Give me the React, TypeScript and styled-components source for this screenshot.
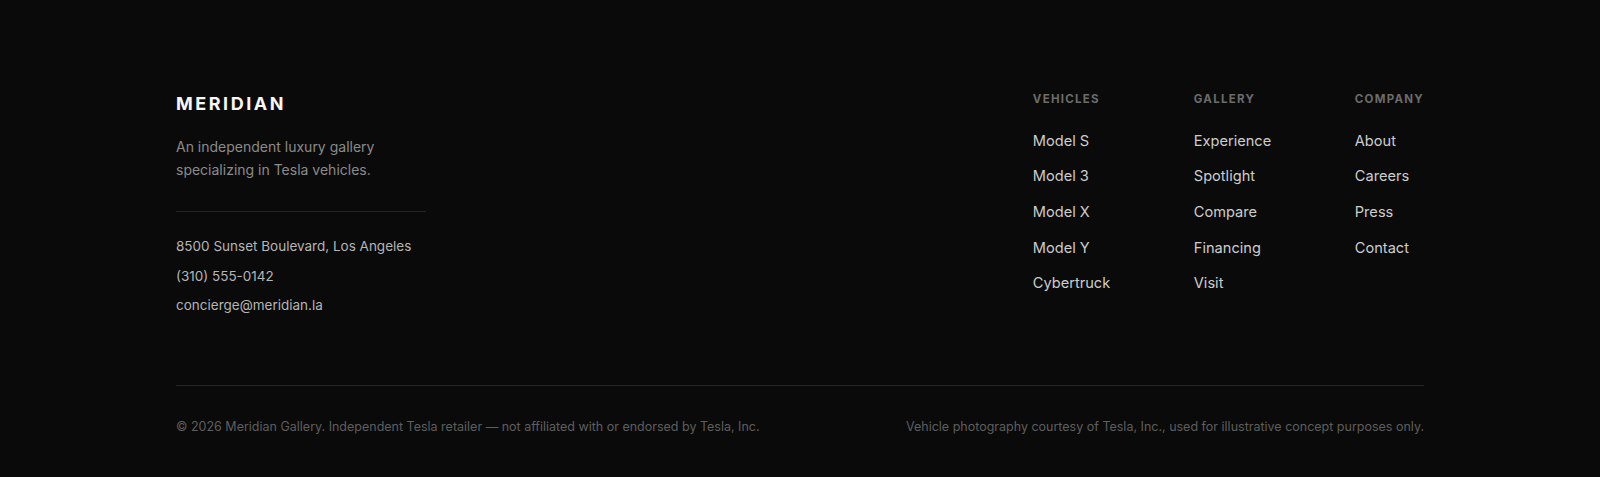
import React from "react";
import styled, { createGlobalStyle } from "styled-components";

const GlobalStyle = createGlobalStyle`
  html, body {
    margin: 0;
    padding: 0;
    background: #0a0a0a;
  }
  body {
    font-family: Inter, "Noto Sans", "Liberation Sans", sans-serif;
    -webkit-font-smoothing: antialiased;
  }
  * { box-sizing: border-box; }
`;

const Footer = styled.footer`
  background: #0a0a0a;
  padding: 90px 0 40px;
`;

const Container = styled.div`
  width: 1248px;
  margin: 0 auto;
`;

const Top = styled.div`
  display: flex;
  justify-content: space-between;
  align-items: flex-start;
`;

const Brand = styled.div`
  width: 250px;
  display: flex;
  flex-direction: column;
`;

const Logo = styled.div`
  padding-top: 1px;
  font-size: 18px;
  line-height: 26px;
  font-weight: 700;
  letter-spacing: 0.14em;
  color: #f7f7f7;
`;

const Tagline = styled.p`
  margin: 18px 0 0;
  font-size: 14px;
  line-height: 23px;
  color: #8a8a8a;
`;

const Contact = styled.div`
  margin-top: 30px;
  padding-top: 23px;
  border-top: 1px solid #242424;
  display: flex;
  flex-direction: column;
  gap: 7.5px;
`;

const ContactLine = styled.span`
  font-size: 13.5px;
  line-height: 22px;
  font-weight: 400;
  color: #b5b5b5;
  white-space: nowrap;
`;

const Nav = styled.nav`
  display: flex;
  padding-top: 1px;
`;

const Column = styled.div<{ $last?: boolean }>`
  width: ${(p) => (p.$last ? "auto" : "161px")};
  display: flex;
  flex-direction: column;
`;

const Heading = styled.h4`
  margin: 0;
  font-size: 11.5px;
  line-height: 16.5px;
  font-weight: 700;
  letter-spacing: 0.11em;
  text-transform: uppercase;
  color: #6b6b6b;
`;

const LinkList = styled.ul`
  list-style: none;
  margin: 23px 0 0;
  padding: 0;
  display: flex;
  flex-direction: column;
  gap: 14px;
`;

const LinkItem = styled.li`
  font-size: 14.6px;
  line-height: 21.7px;
  font-weight: 400;
  color: #cdcdcd;
  white-space: nowrap;
`;

const Bottom = styled.div`
  margin-top: 69px;
  padding-top: 32px;
  border-top: 1px solid #262626;
  display: flex;
  justify-content: space-between;
  align-items: center;
`;

const Fine = styled.span`
  font-size: 12.5px;
  line-height: 18px;
  font-weight: 400;
  color: #5e5e5e;
  white-space: nowrap;
`;

const columns = [
  { title: "Vehicles", links: ["Model S", "Model 3", "Model X", "Model Y", "Cybertruck"] },
  { title: "Gallery", links: ["Experience", "Spotlight", "Compare", "Financing", "Visit"] },
  { title: "Company", links: ["About", "Careers", "Press", "Contact"] },
];

export default function App() {
  return (
    <>
      <GlobalStyle />
      <Footer>
        <Container>
          <Top>
            <Brand>
              <Logo>MERIDIAN</Logo>
              <Tagline>
                An independent luxury gallery
                <br />
                specializing in Tesla vehicles.
              </Tagline>
              <Contact>
                <ContactLine>8500 Sunset Boulevard, Los Angeles</ContactLine>
                <ContactLine>(310) 555-0142</ContactLine>
                <ContactLine>concierge@meridian.la</ContactLine>
              </Contact>
            </Brand>
            <Nav>
              {columns.map((c, i) => (
                <Column key={c.title} $last={i === columns.length - 1}>
                  <Heading>{c.title}</Heading>
                  <LinkList>
                    {c.links.map((l) => (
                      <LinkItem key={l}>{l}</LinkItem>
                    ))}
                  </LinkList>
                </Column>
              ))}
            </Nav>
          </Top>
          <Bottom>
            <Fine>
              © 2026 Meridian Gallery. Independent Tesla retailer — not affiliated with or endorsed by Tesla, Inc.
            </Fine>
            <Fine>
              Vehicle photography courtesy of Tesla, Inc., used for illustrative concept purposes only.
            </Fine>
          </Bottom>
        </Container>
      </Footer>
    </>
  );
}
